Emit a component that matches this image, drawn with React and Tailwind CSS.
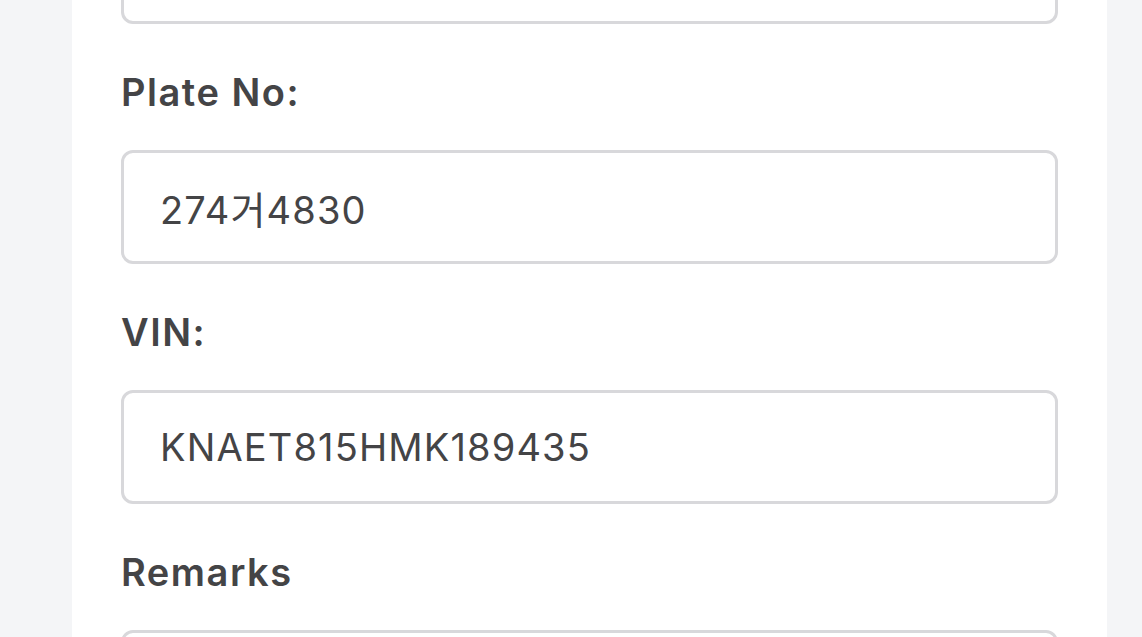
import React from 'react';

const fields = [
    { label: 'Plate No:', value: '274거4830' },
    { label: 'VIN:', value: 'KNAET815HMK189435' },
];

const inputClass = 'block w-full h-[114px] rounded-[12px] border-[3px] border-[#d8d8db] bg-white px-[36px] text-[38px] tracking-[0.03em] text-[#444446] outline-none';
const labelClass = 'block text-[38px] leading-[44px] font-semibold tracking-[0.04em] text-[#444446] mb-[36px]';

const App = () => {
    return (
        <div className="h-[637px] overflow-hidden bg-[#f4f5f7] px-[72px]" style={{ fontFamily: 'Inter, "Noto Sans CJK KR", sans-serif' }}>
            <div className="bg-white min-h-[900px] w-[1035px] px-[49px] mt-[-90px]">
                {/* previous field, scrolled mostly out of view */}
                <input className={inputClass} defaultValue="" readOnly />

                {fields.map(f => (
                    <div key={f.label} className="pt-[46px]">
                        <label className={labelClass}>{f.label}</label>
                        <input className={inputClass} defaultValue={f.value} readOnly />
                    </div>
                ))}

                <div className="pt-[46px]">
                    <label className={labelClass}>Remarks</label>
                    <textarea className="block w-full h-[114px] rounded-[12px] border-[3px] border-[#d8d8db] bg-white px-[36px] text-[38px] outline-none resize-none" readOnly />
                </div>
            </div>
        </div>
    );
};

export default App;
